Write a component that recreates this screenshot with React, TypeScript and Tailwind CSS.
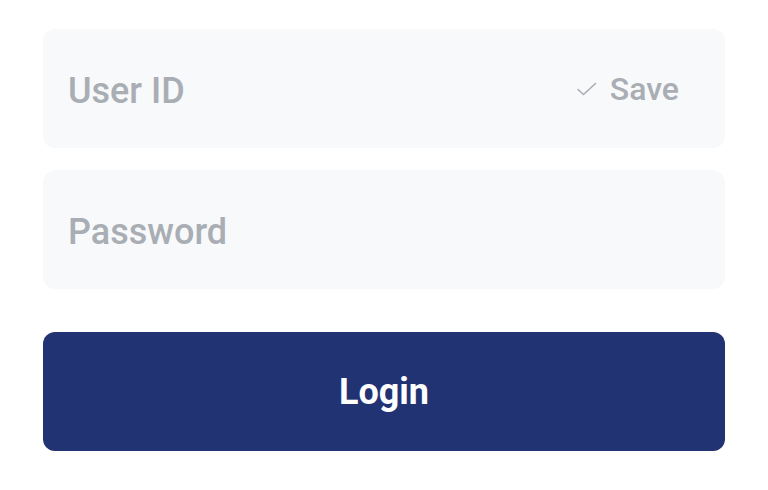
import React from "react";

export default function App() {
  return (
    <div className="w-[768px] h-[490px] bg-white px-[43px] pt-[29px]" style={{ fontFamily: "Roboto, 'Noto Sans', sans-serif" }}>
      <div className="flex flex-col">
        <div className="h-[119px] rounded-[12px] bg-[#f8f9fa] flex items-center pl-[25px] pr-[46px]">
          <input
            className="flex-1 min-w-0 bg-transparent outline-none pt-[4px] text-[36px] font-medium text-[#a9adb4] placeholder:text-[#a9adb4]"
            placeholder="User ID"
          />
          <div className="flex items-center gap-[12px] text-[#a9adb4]">
            <svg width="22" height="16" viewBox="0 0 22 16" fill="none">
              <path d="M2 8.5 L7.5 13.5 L19.5 2.5" stroke="#a9adb4" strokeWidth="1.6" strokeLinecap="round" strokeLinejoin="round" />
            </svg>
            <span className="text-[32px] font-medium">Save</span>
          </div>
        </div>
        <div className="mt-[22px] h-[119px] rounded-[12px] bg-[#f8f9fa] flex items-center pl-[25px] pr-[46px]">
          <input
            type="password"
            className="flex-1 min-w-0 bg-transparent outline-none pt-[4px] text-[36px] font-medium text-[#a9adb4] placeholder:text-[#a9adb4]"
            placeholder="Password"
          />
        </div>
        <button className="mt-[43px] h-[119px] rounded-[12px] bg-[#213373] text-white text-[36px] font-bold flex items-center justify-center">
          Login
        </button>
      </div>
    </div>
  );
}
